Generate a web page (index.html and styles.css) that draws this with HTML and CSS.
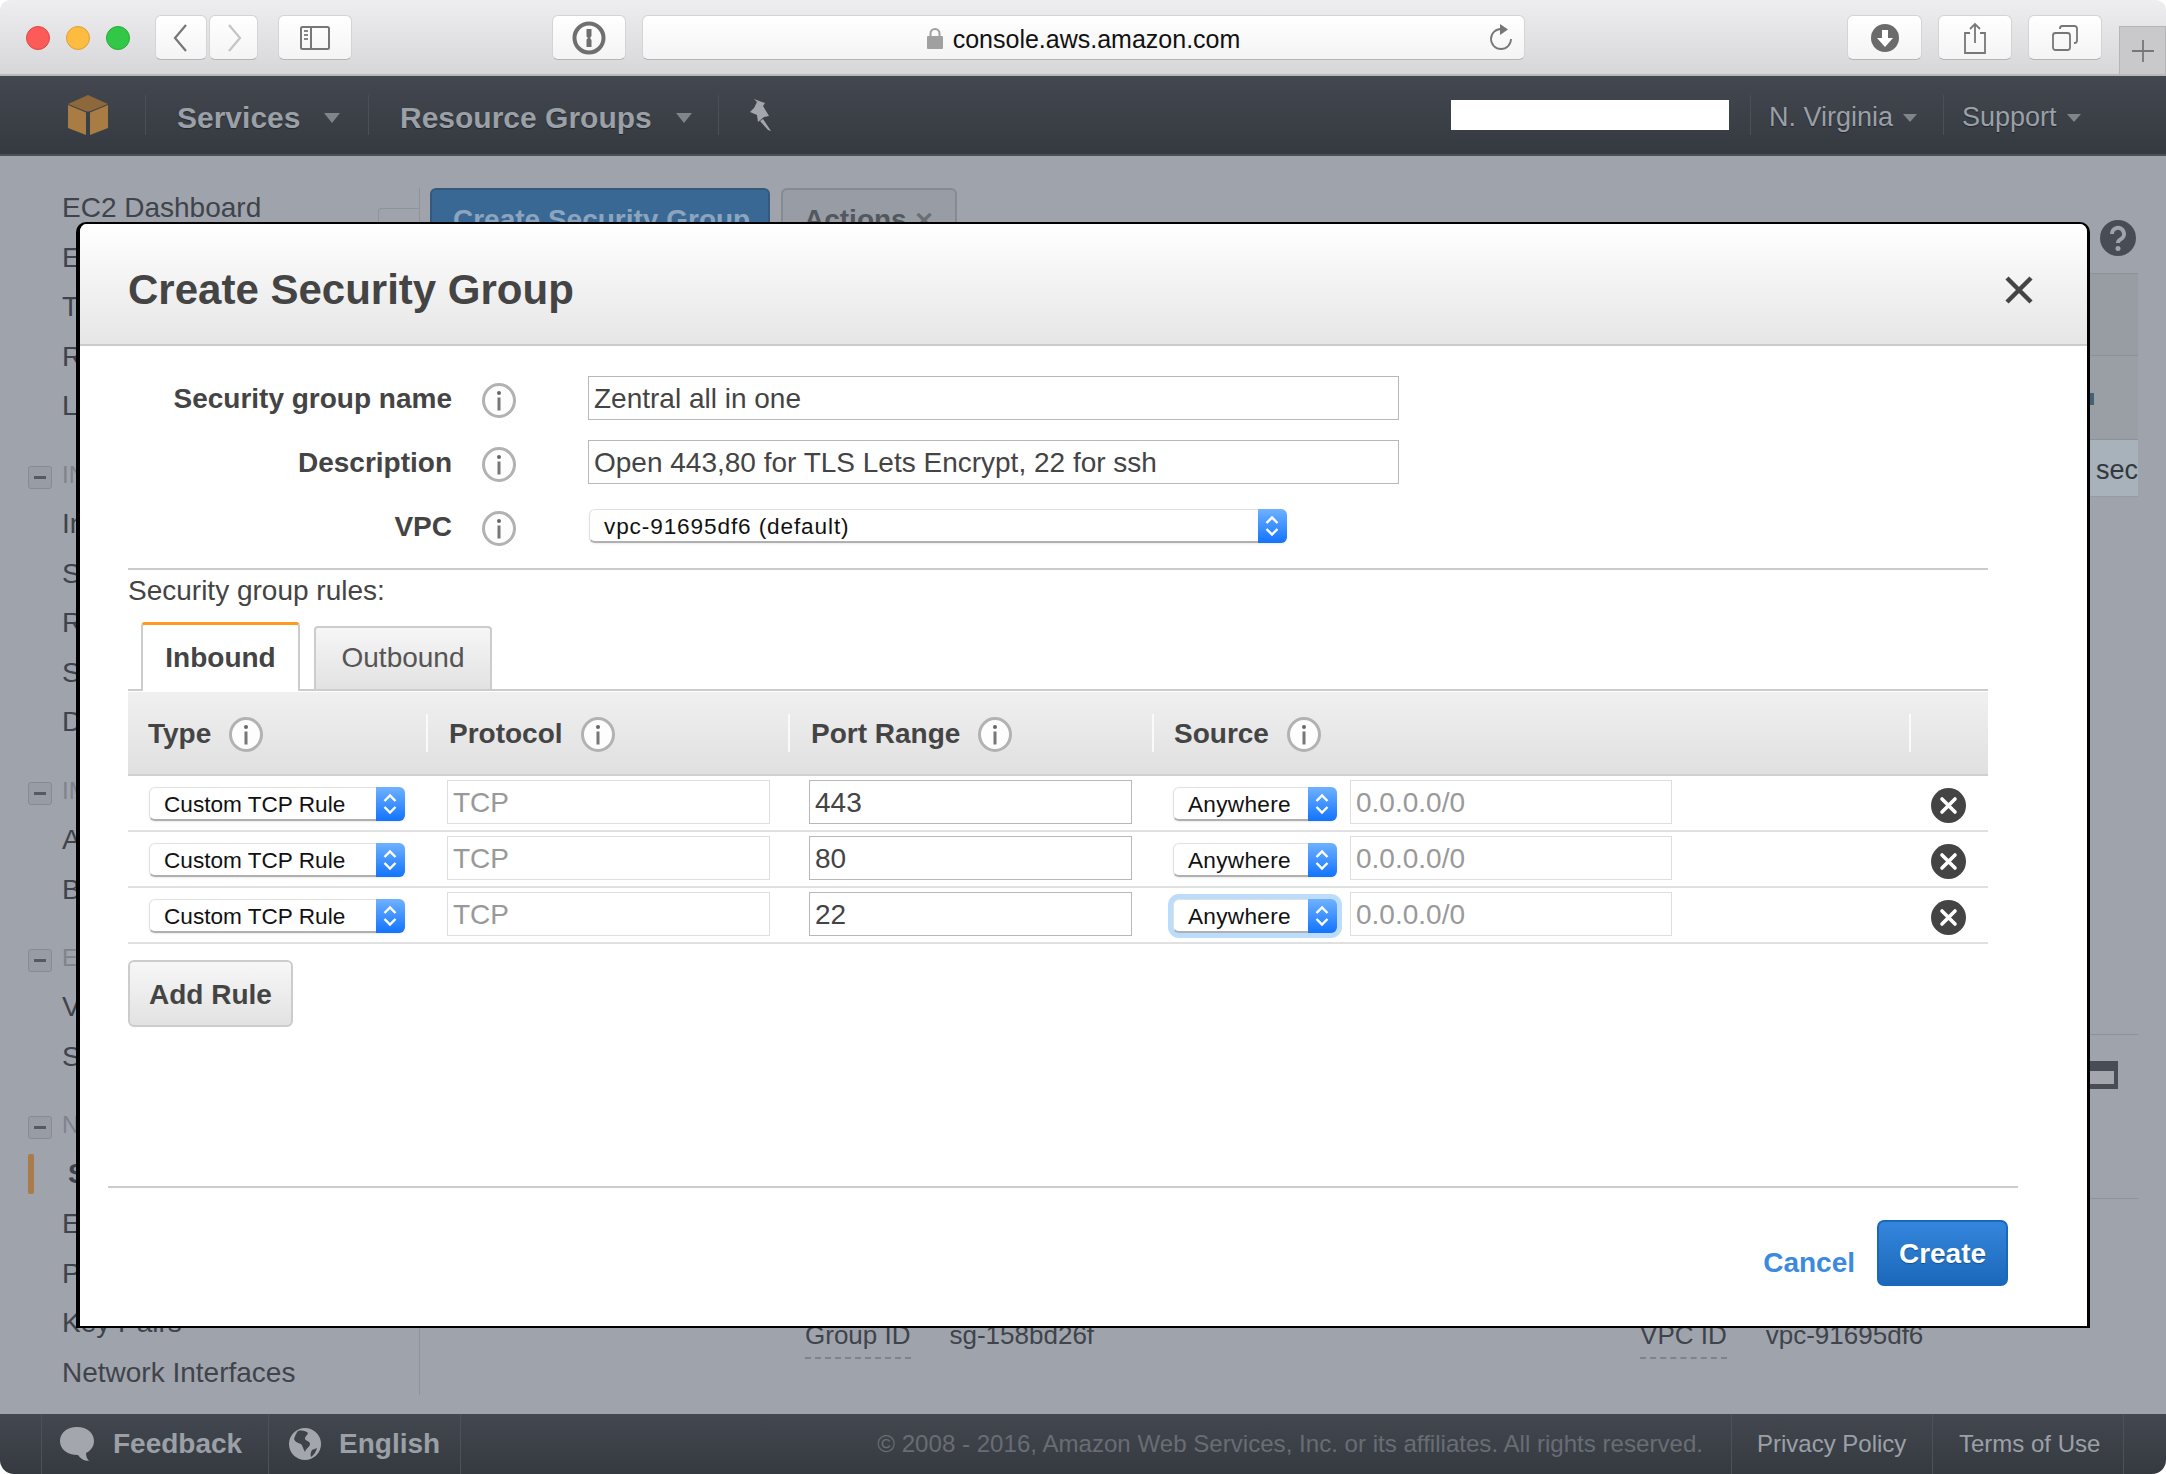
FILE: index.html
```html
<!DOCTYPE html>
<html lang="en">
<head>
  <meta charset="UTF-8" />
  <title>Create Security Group</title>
  <link rel="stylesheet" href="styles.css">
</head>

<body>
  <!-- Shared icons -->
  <svg class="icon-defs" width="0" height="0">
    <symbol id="info" viewBox="0 0 34 35">
      <ellipse cx="17" cy="17.5" rx="15.5" ry="16" fill="#fdfdfd" stroke="#b2b2b2" stroke-width="3"/>
      <circle cx="17" cy="10" r="2" fill="#666"/>
      <rect x="15.5" y="14.5" width="3" height="13" fill="#777"/>
    </symbol>
    <symbol id="updown" viewBox="0 0 28 34">
      <path d="M8.5 14l5.5-5.5 5.500 5.500M8.500 20l5.500 5.500 5.500-5.500" fill="none" stroke="#fff" stroke-width="2.400"/>
    </symbol>
    <symbol id="remove" viewBox="0 0 35 35">
      <circle cx="17.500" cy="17.500" r="17.500" fill="#444"/>
      <path d="M11 11l13 13M24 11L11 24" stroke="#fff" stroke-width="3.600" stroke-linecap="round"/>
    </symbol>
  </svg>

  <div class="window">

    <!-- Safari toolbar -->
    <div class="toolbar">
      <div class="lights">
        <span class="light red"></span>
        <span class="light yellow"></span>
        <span class="light green"></span>
      </div>
      <div class="tool back">
        <svg width="20" height="30" viewBox="0 0 20 30"><path d="M15 2L4 15l11 13" fill="none" stroke="#777" stroke-width="2.200"/></svg>
      </div>
      <div class="tool forward">
        <svg width="20" height="30" viewBox="0 0 20 30"><path d="M5 2l11 13L5 28" fill="none" stroke="#c4c4c4" stroke-width="2.200"/></svg>
      </div>
      <div class="tool sidebar-toggle">
        <svg width="30" height="24" viewBox="0 0 30 24">
          <rect x="1" y="1" width="28" height="22" rx="1.500" fill="none" stroke="#777" stroke-width="2"/>
          <path d="M11 1v22" stroke="#777" stroke-width="2"/>
          <path d="M4 5h4M4 9h4M4 13h4" stroke="#888" stroke-width="2"/>
        </svg>
      </div>
      <div class="tool onepass">
        <svg width="34" height="34" viewBox="0 0 34 34">
          <circle cx="17" cy="17" r="14.500" fill="none" stroke="#6f6f6f" stroke-width="4"/>
          <path d="M14.500 8h5v7l-1.500 2 1.500 2v7h-5v-7.500l1.500-1.500-1.500-1.500z" fill="#6f6f6f"/>
        </svg>
      </div>
      <div class="urlbar">
        <div class="url">
          <svg width="16" height="22" viewBox="0 0 16 22">
            <path d="M3.500 10V6.500a4.500 4.500 0 0 1 9 0V10" fill="none" stroke="#a0a0a0" stroke-width="2"/>
            <rect y="9" width="16" height="13" rx="1" fill="#a0a0a0"/>
          </svg>
          <span>console.aws.amazon.com</span>
        </div>
        <svg class="reload" width="24" height="28" viewBox="0 0 24 28">
          <path d="M12 5a10 10 0 1 0 10 10" fill="none" stroke="#777" stroke-width="1.800"/>
          <path d="M11 0l8 5.500-8 5.500z" fill="#777"/>
        </svg>
      </div>
      <div class="tool download">
        <svg width="28" height="28" viewBox="0 0 28 28">
          <circle cx="14" cy="14" r="14" fill="#6b6b6b"/>
          <path d="M11 6h6v8h5l-8 9-8-9h5z" fill="#fff"/>
        </svg>
      </div>
      <div class="tool share">
        <svg width="24" height="32" viewBox="0 0 24 32">
          <path d="M7 11H2v20h20V11h-5" fill="none" stroke="#777" stroke-width="1.800"/>
          <path d="M12 21V2M7 7l5-5 5 5" fill="none" stroke="#777" stroke-width="1.800"/>
        </svg>
      </div>
      <div class="tool tabs-btn">
        <svg width="26" height="26" viewBox="0 0 26 26">
          <rect x="1" y="8" width="17" height="17" rx="2.500" fill="none" stroke="#777" stroke-width="1.800"/>
          <path d="M8 4V3.500A2.500 2.500 0 0 1 10.500 1h12A2.500 2.500 0 0 1 25 3.500v12a2.500 2.500 0 0 1-2.500 2.500H22" fill="none" stroke="#777" stroke-width="1.800"/>
        </svg>
      </div>
      <div class="new-tab">
        <svg width="24" height="24" viewBox="0 0 24 24"><path d="M12 1v22M1 12h22" stroke="#777" stroke-width="1.800"/></svg>
      </div>
    </div>

    <!-- AWS navigation -->
    <div class="topnav">
      <div class="nav-logo">
        <svg width="40" height="40" viewBox="0 0 40 40">
          <path d="M20 0l20 9-18.500 7.500h-3L0 9z" fill="#8c683a"/>
          <path d="M0 10l18 7.500V40L0 33z" fill="#a87c43"/>
          <path d="M40 10l-18 7.500V40l18-7z" fill="#a87c43"/>
        </svg>
      </div>
      <div class="nav-item services">Services<span class="caret"></span></div>
      <div class="nav-item resources">Resource Groups<span class="caret"></span></div>
      <div class="nav-item pin">
        <svg width="26" height="34" viewBox="0 0 26 34">
          <path d="M7 1l11 4-2 3 6 10-5 1-6 5-1-7-7-3 4-4 3-6z" fill="#a3a7ad"/>
          <path d="M16 21l8 12-3-1-8-9z" fill="#a3a7ad"/>
        </svg>
      </div>
      <div class="nav-spacer"></div>
      <div class="account-mask"></div>
      <div class="nav-item small region">N. Virginia<span class="caret tiny"></span></div>
      <div class="nav-item small support">Support<span class="caret tiny"></span></div>
    </div>

    <!-- EC2 console, dimmed behind the dialog -->
    <div class="console">
      <div class="sidenav">
        <div class="side-item">EC2 Dashboard</div>
        <div class="side-item">Events</div>
        <div class="side-item">Tags</div>
        <div class="side-item">Reports</div>
        <div class="side-item">Limits</div>

        <div class="side-section"><span class="collapse"></span>INSTANCES</div>
        <div class="side-item">Instances</div>
        <div class="side-item">Spot Requests</div>
        <div class="side-item">Reserved Instances</div>
        <div class="side-item">Scheduled Instances</div>
        <div class="side-item">Dedicated Hosts</div>

        <div class="side-section"><span class="collapse"></span>IMAGES</div>
        <div class="side-item">AMIs</div>
        <div class="side-item">Bundle Tasks</div>

        <div class="side-section"><span class="collapse"></span>ELASTIC BLOCK STORE</div>
        <div class="side-item">Volumes</div>
        <div class="side-item">Snapshots</div>

        <div class="side-section"><span class="collapse"></span>NETWORK &amp; SECURITY</div>
        <div class="side-item active">Security Groups</div>
        <div class="side-item">Elastic IPs</div>
        <div class="side-item">Placement Groups</div>
        <div class="side-item">Key Pairs</div>
        <div class="side-item">Network Interfaces</div>
      </div>

      <div class="main">
        <div class="main-actions">
          <div class="bg-btn primary">Create Security Group</div>
          <div class="bg-btn">Actions <span class="bg-x">&#10005;</span></div>
          <svg class="help" width="36" height="36" viewBox="0 0 36 36">
            <circle cx="18" cy="18" r="18" fill="#484d55"/>
            <path d="M12 14a6 6 0 1 1 9 5c-2 1-3 2-3 4" fill="none" stroke="#9fa3ab" stroke-width="4"/>
            <circle cx="18" cy="28.500" r="2.500" fill="#9fa3ab"/>
          </svg>
        </div>
        <div class="grid-head"></div>
        <div class="grid-row"><span class="row-mark"></span></div>
        <div class="grid-row selected"><span class="row-text">sec</span></div>
        <div class="detail-tabs"><span class="detail-icon"></span></div>
        <div class="detail-line"></div>
        <div class="detail-fields">
          <span class="detail-label first">Group ID</span>
          <span class="detail-value">sg-158bd26f</span>
          <span class="detail-label second">VPC ID</span>
          <span class="detail-value">vpc-91695df6</span>
        </div>
      </div>
    </div>

    <!-- Footer -->
    <div class="footer">
      <div class="foot-item feedback">
        <svg width="36" height="34" viewBox="0 0 36 34"><path d="M18 0c10 0 17 6 17 14 0 6-4 10-8 12 0 3 1 6 3 8-5 0-9-3-11-6C8 28 1 22 1 14 1 6 8 0 18 0z" fill="#a3a7ad"/></svg>
        <span>Feedback</span>
      </div>
      <div class="foot-item english">
        <svg width="32" height="32" viewBox="0 0 32 32">
          <circle cx="16" cy="16" r="16" fill="#a3a7ad"/>
          <path d="M9 3c4-1 8 0 10 2-1 3-3 3-3 6 1 2 5 2 5 5s-4 4-5 8c-2-3-2-6-4-8-3-1-6-2-7-5 1-3 2-6 4-8zM23 22l5-2c-1 4-3 7-6 9-1-3 0-5 1-7z" fill="#3e4249"/>
        </svg>
        <span>English</span>
      </div>
      <div class="copyright">&copy; 2008 - 2016, Amazon Web Services, Inc. or its affiliates. All rights reserved.</div>
      <div class="foot-link privacy">Privacy Policy</div>
      <div class="foot-link terms">Terms of Use</div>
      <div class="foot-end"></div>
    </div>

    <!-- Dialog -->
    <div class="modal">
      <div class="modal-header">
        <div class="modal-title">Create Security Group</div>
        <svg class="modal-close" width="28" height="28" viewBox="0 0 28 28"><path d="M2 2l24 24M26 2L2 26" stroke="#444" stroke-width="4.500"/></svg>
      </div>

      <div class="modal-body">
        <div class="form-row">
          <div class="form-label">Security group name</div>
          <svg class="info form-info"><use href="#info"/></svg>
          <div class="field wide">Zentral all in one</div>
        </div>
        <div class="form-row">
          <div class="form-label">Description</div>
          <svg class="info form-info"><use href="#info"/></svg>
          <div class="field wide">Open 443,80 for TLS Lets Encrypt, 22 for ssh</div>
        </div>
        <div class="form-row vpc-row">
          <div class="form-label">VPC</div>
          <svg class="info form-info"><use href="#info"/></svg>
          <div class="select vpc-select">
            <span class="select-text">vpc-91695df6 (default)</span>
            <span class="select-arrow"><svg width="28" height="34"><use href="#updown"/></svg></span>
          </div>
        </div>

        <div class="rules">
          <div class="rules-title">Security group rules:</div>
          <div class="tabs">
            <div class="tab active">Inbound</div>
            <div class="tab">Outbound</div>
          </div>

          <div class="rule-head">
            <div class="head-cell first">Type<svg class="info"><use href="#info"/></svg></div>
            <div class="head-cell">Protocol<svg class="info"><use href="#info"/></svg></div>
            <div class="head-cell">Port Range<svg class="info"><use href="#info"/></svg></div>
            <div class="head-cell source-head">Source<svg class="info"><use href="#info"/></svg></div>
            <div class="head-cell"></div>
          </div>

          <div class="rule-row">
            <div class="select type-select"><span class="select-text">Custom TCP Rule</span><span class="select-arrow"><svg width="28" height="34"><use href="#updown"/></svg></span></div>
            <div class="field cell-field readonly">TCP</div>
            <div class="field cell-field">443</div>
            <div class="source-cell">
              <div class="select source-select"><span class="select-text">Anywhere</span><span class="select-arrow"><svg width="28" height="34"><use href="#updown"/></svg></span></div>
              <div class="field ip-field readonly">0.0.0.0/0</div>
            </div>
            <svg class="remove"><use href="#remove"/></svg>
          </div>
          <div class="rule-row">
            <div class="select type-select"><span class="select-text">Custom TCP Rule</span><span class="select-arrow"><svg width="28" height="34"><use href="#updown"/></svg></span></div>
            <div class="field cell-field readonly">TCP</div>
            <div class="field cell-field">80</div>
            <div class="source-cell">
              <div class="select source-select"><span class="select-text">Anywhere</span><span class="select-arrow"><svg width="28" height="34"><use href="#updown"/></svg></span></div>
              <div class="field ip-field readonly">0.0.0.0/0</div>
            </div>
            <svg class="remove"><use href="#remove"/></svg>
          </div>
          <div class="rule-row">
            <div class="select type-select"><span class="select-text">Custom TCP Rule</span><span class="select-arrow"><svg width="28" height="34"><use href="#updown"/></svg></span></div>
            <div class="field cell-field readonly">TCP</div>
            <div class="field cell-field">22</div>
            <div class="source-cell">
              <div class="select source-select focused"><span class="select-text">Anywhere</span><span class="select-arrow"><svg width="28" height="34"><use href="#updown"/></svg></span></div>
              <div class="field ip-field readonly">0.0.0.0/0</div>
            </div>
            <svg class="remove"><use href="#remove"/></svg>
          </div>

          <div class="add-rule">Add Rule</div>
        </div>
      </div>

      <div class="modal-footer">
        <div class="cancel">Cancel</div>
        <div class="create">Create</div>
      </div>
    </div>
  </div>
</body>
</html>
```

FILE: styles.css
```css
* {
  box-sizing: border-box;
}

body {
  margin: 0;
  background-color: #ffffff;
  font-family: "Liberation Sans", Arial, sans-serif;
  color: #3f444b;
}

.icon-defs {
  position: absolute;
}

.window {
  position: relative;
  width: 2166px;
  height: 1474px;
  display: flex;
  flex-direction: column;
  overflow: hidden;
  border-radius: 10px 10px 14px 14px;
}

/* Safari toolbar */
.toolbar {
  height: 76px;
  flex: none;
  display: flex;
  align-items: flex-start;
  padding-top: 15px;
  background: linear-gradient(#eeedef, #d7d6d8);
  border-bottom: 2px solid #b9b8ba;
}

.lights {
  display: flex;
  gap: 16px;
  margin: 11px 25px 0 26px;
}

.light {
  width: 24px;
  height: 24px;
  border-radius: 50%;
}

.light.red {
  background-color: #fc5b57;
  border: 1px solid #df4744;
}

.light.yellow {
  background-color: #fdbc40;
  border: 1px solid #de9f34;
}

.light.green {
  background-color: #33c748;
  border: 1px solid #27aa35;
}

.tool {
  height: 45px;
  display: flex;
  align-items: center;
  justify-content: center;
  background: linear-gradient(#ffffff, #f4f4f4);
  border: 1px solid #d4d4d4;
  border-bottom-color: #b5b5b5;
  border-radius: 6px;
}

.back {
  width: 52px;
}

.forward {
  width: 49px;
  margin-left: 2px;
}

.sidebar-toggle {
  width: 74px;
  margin-left: 20px;
}

.onepass {
  width: 74px;
  margin-left: 200px;
}

.urlbar {
  width: 883px;
  height: 45px;
  margin-left: 16px;
  position: relative;
  display: flex;
  align-items: center;
  justify-content: center;
  background: linear-gradient(#ffffff, #f4f4f4);
  border: 1px solid #d4d4d4;
  border-bottom-color: #b5b5b5;
  border-radius: 6px;
}

.url {
  display: flex;
  align-items: center;
  gap: 10px;
  font-size: 25px;
  color: #111;
}

.url span {
  padding-top: 3px;
}

.reload {
  position: absolute;
  right: 11px;
  top: 8px;
}

.download {
  width: 75px;
  margin-left: 322px;
}

.share {
  width: 74px;
  margin-left: 16px;
}

.tabs-btn {
  width: 74px;
  margin-left: 16px;
}

.new-tab {
  width: 47px;
  height: 48px;
  margin: 11px 0 0 17px;
  display: flex;
  align-items: center;
  justify-content: center;
  background-color: #c9c8ca;
  border: 1px solid #b5b4b6;
  border-bottom: none;
}

/* Top navigation */
.topnav {
  height: 80px;
  flex: none;
  display: flex;
  align-items: center;
  background: linear-gradient(#434850, #353940);
  border-bottom: 2px solid #4a4e55;
  color: #9ba0a7;
  font-weight: bold;
  font-size: 30px;
  text-shadow: 0 1px 1px #22262b;
}

.nav-logo {
  width: 145px;
  height: 40px;
  padding-left: 68px;
}

.nav-item {
  height: 40px;
  display: flex;
  align-items: center;
  padding-top: 5px;
  border-left: 1px solid #4b5058;
}

.services {
  width: 223px;
  padding-left: 31px;
}

.resources {
  width: 350px;
  padding-left: 31px;
}

.pin {
  width: 80px;
  padding-top: 0;
  padding-left: 28px;
}

.nav-spacer {
  flex: 1;
}

.account-mask {
  width: 278px;
  height: 30px;
  margin-right: 21px;
  background-color: #ffffff;
}

.nav-item.small {
  font-weight: normal;
  font-size: 27px;
}

.region {
  width: 193px;
  padding-left: 18px;
}

.support {
  width: 223px;
  padding-left: 18px;
}

.caret {
  width: 0;
  height: 0;
  margin-left: 24px;
  margin-top: 1px;
  border-left: 8px solid transparent;
  border-right: 8px solid transparent;
  border-top: 10px solid #80858c;
}

.caret.tiny {
  margin-left: 10px;
  border-left-width: 7px;
  border-right-width: 7px;
  border-top-width: 8px;
}

/* Console behind the dialog */
.console {
  flex: 1;
  display: flex;
  background-color: #9fa3ab;
}

.sidenav {
  position: relative;
  width: 420px;
  flex: none;
  padding: 27px 0 0 62px;
  font-size: 28px;
}

.sidenav::before {
  content: "";
  position: absolute;
  top: 32px;
  bottom: 19px;
  right: 0;
  border-right: 1px solid #8f939b;
}

.sidenav::after {
  content: "";
  position: absolute;
  top: 52px;
  right: 0;
  width: 41px;
  height: 14px;
  border-top: 1px solid #8f939b;
  border-left: 1px solid #8f939b;
  border-top-left-radius: 4px;
}

.side-item {
  height: 49.6px;
  line-height: 49.6px;
  white-space: nowrap;
}

.side-item.active {
  position: relative;
  padding-left: 6px;
  font-weight: bold;
}

.side-item.active::before {
  content: "";
  position: absolute;
  left: -34px;
  top: 5px;
  width: 6px;
  height: 40px;
  background-color: #a97c4a;
  border-radius: 2px;
}

.side-section {
  position: relative;
  height: 48px;
  margin-top: 20px;
  line-height: 48px;
  font-size: 24px;
  color: #7f848c;
  white-space: nowrap;
}

.collapse {
  position: absolute;
  left: -34px;
  top: 15px;
  width: 24px;
  height: 23px;
  border: 1px solid #868a92;
  border-radius: 3px;
  background-color: #989ca4;
}

.collapse::after {
  content: "";
  position: absolute;
  left: 5px;
  right: 5px;
  top: 9px;
  height: 3px;
  background-color: #555a61;
}

.main {
  flex: 1;
  display: flex;
  flex-direction: column;
  padding: 32px 28px 0 10px;
  min-width: 0;
}

.main-actions {
  height: 85px;
  display: flex;
  align-items: flex-start;
  gap: 11px;
}

.bg-btn {
  height: 60px;
  padding: 14px 21px 0;
  border: 2px solid #868a92;
  border-radius: 6px;
  font-size: 28px;
  font-weight: bold;
  color: #53575e;
  background-color: #989ca4;
  white-space: nowrap;
}

.bg-btn.primary {
  width: 340px;
  color: #8ca5bf;
  background-color: #3a6894;
  border-color: #34597c;
}

.bg-x {
  font-size: 24px;
  color: #6a6e75;
}

.help {
  margin: 32px 2px 0 auto;
}

.grid-head {
  height: 83px;
  flex: none;
  background-color: #989ca3;
  border-top: 1px solid #8d9198;
  border-bottom: 1px solid #8d9198;
}

.grid-row {
  position: relative;
  height: 84px;
  flex: none;
  background-color: #9a9ea5;
  border-bottom: 1px solid #8d9198;
  font-size: 28px;
}

.row-mark {
  position: absolute;
  right: 44px;
  top: 37px;
  width: 5px;
  height: 12px;
  background-color: #446277;
}

.grid-row.selected {
  height: 57px;
  display: flex;
  justify-content: flex-end;
  align-items: center;
  padding-top: 4px;
  background-color: #a7b2ba;
  border-bottom: 1px solid #959ca4;
}

.row-text {
  font-size: 27px;
  color: #33383e;
}

.detail-tabs {
  position: relative;
  height: 538px;
  flex: none;
  border-bottom: 1px solid #8d9198;
}

.detail-icon {
  position: absolute;
  right: 20px;
  bottom: -55px;
  width: 40px;
  height: 28px;
  background-color: #a3a7ad;
  border: 4px solid #484d55;
  border-top-width: 10px;
  border-bottom-width: 5px;
}

.detail-line {
  height: 164px;
  flex: none;
  border-bottom: 1px solid #8d9198;
}

.detail-fields {
  display: flex;
  margin-top: 121px;
  font-size: 26px;
  white-space: nowrap;
}

.detail-label {
  height: 39px;
  border-bottom: 2px dashed #7f848c;
}

.detail-label.first {
  margin-left: 375px;
}

.detail-label.second {
  margin-left: 546px;
}

.detail-value {
  margin-left: 39px;
}

/* Footer */
.footer {
  height: 60px;
  flex: none;
  display: flex;
  align-items: stretch;
  padding-left: 41px;
  background: linear-gradient(#434850, #353940);
  color: #9ba0a7;
  font-size: 24px;
}

.foot-item,
.foot-link {
  display: flex;
  align-items: center;
  border-left: 1px solid #4d5159;
}

.foot-item {
  gap: 18px;
  font-size: 28px;
  font-weight: bold;
}

.feedback {
  width: 227px;
  padding-left: 17px;
}

.english {
  width: 193px;
  padding-left: 20px;
  border-right: 1px solid #4d5159;
}

.copyright {
  margin-left: auto;
  padding-right: 28px;
  line-height: 60px;
  font-size: 24.1px;
  color: #686d74;
}

.privacy {
  width: 201px;
  padding-left: 25px;
}

.terms {
  width: 192px;
  padding-left: 26px;
  border-right: 1px solid #4d5159;
}

.foot-end {
  width: 42px;
}

/* Dialog */
.modal {
  position: absolute;
  left: 76px;
  top: 222px;
  width: 2014px;
  height: 1106px;
  display: flex;
  flex-direction: column;
  background-color: #ffffff;
  border: 3px solid #000000;
  border-left-width: 4px;
  border-top-width: 2px;
  border-bottom-width: 2px;
  border-radius: 10px 10px 0 0;
}

.modal-header {
  height: 122px;
  flex: none;
  display: flex;
  align-items: center;
  justify-content: space-between;
  padding: 11px 54px 0 48px;
  background: linear-gradient(#ffffff, #e6e6e6);
  border-bottom: 2px solid #cccccc;
  border-radius: 8px 8px 0 0;
}

.modal-title {
  font-size: 42px;
  font-weight: bold;
  color: #444444;
}

.modal-body {
  flex: 1;
  padding-top: 30px;
}

.form-row {
  height: 44px;
  margin-bottom: 20px;
  display: flex;
  align-items: center;
}

.form-label {
  width: 372px;
  padding-top: 2px;
  text-align: right;
  font-size: 28px;
  font-weight: bold;
  color: #444444;
}

.info {
  width: 34px;
  height: 35px;
  flex: none;
}

.form-info {
  margin: 4px 72px 0 30px;
}

.field {
  height: 44px;
  line-height: 43px;
  padding-left: 5px;
  border: 1px solid #b8b8b8;
  background-color: #ffffff;
  font-size: 28px;
  color: #444444;
}

.field.readonly {
  border-color: #dedede;
  color: #999999;
}

.wide {
  width: 811px;
}

.select {
  height: 34px;
  display: flex;
  background-color: #ffffff;
  border: 1px solid #e0e0e0;
  border-bottom: 2px solid #b0b0b0;
  border-radius: 6px;
  box-shadow: 0 1px 2px rgba(0, 0, 0, 0.08);
  font-size: 22.6px;
  color: #111111;
}

.select-text {
  flex: 1;
  padding-left: 14px;
  line-height: 34px;
  white-space: nowrap;
}

.select-arrow {
  width: 29px;
  height: 34px;
  margin: -1px -1px -2px 0;
  flex: none;
  background: linear-gradient(#6fb2ff, #1273ff);
  border-radius: 0 6px 6px 0;
}

.vpc-row {
  height: 34px;
  margin-bottom: 0;
  margin-top: 25px;
}

.vpc-select {
  width: 698px;
  margin-left: 1px;
  letter-spacing: 0.88px;
}

.rules {
  margin: 25px 99px 0 48px;
  border-top: 2px solid #cccccc;
}

.rules-title {
  height: 52px;
  padding-top: 4px;
  line-height: 34px;
  font-size: 28px;
  color: #444444;
}

.tabs {
  height: 69px;
  display: flex;
  align-items: flex-end;
  gap: 14px;
  padding-left: 13px;
  border-bottom: 2px solid #cccccc;
}

.tab {
  width: 178px;
  height: 63px;
  text-align: center;
  line-height: 60px;
  font-size: 28px;
  color: #555555;
  background: linear-gradient(#f6f6f6, #e2e2e2);
  border: 2px solid #cccccc;
  border-bottom: none;
  border-radius: 4px 4px 0 0;
}

.tab.active {
  width: 159px;
  height: 69px;
  margin-bottom: -2px;
  line-height: 66px;
  font-weight: bold;
  color: #444444;
  background: #ffffff;
  border-top: 3px solid #ff9a1f;
}

.rule-head {
  height: 84px;
  margin-top: 1px;
  display: grid;
  grid-template-columns: 298px 362px 364px 757px 79px;
  align-items: center;
  background: linear-gradient(#f0f0f0, #e0e0e0);
  border-bottom: 2px solid #d0d0d0;
}

.head-cell {
  height: 38px;
  display: flex;
  align-items: center;
  gap: 18px;
  padding: 2px 0 0 21px;
  border-left: 2px solid #fafafa;
  font-size: 28px;
  font-weight: bold;
  color: #444444;
}

.head-cell.first {
  padding-left: 20px;
  border-left: none;
}

.head-cell.source-head {
  padding-left: 20px;
}

.rule-row {
  height: 56px;
  display: grid;
  grid-template-columns: 298px 362px 364px 757px 79px;
  align-items: start;
  border-bottom: 2px solid #e0e0e0;
}

.type-select {
  width: 256px;
  margin: 11px 0 0 21px;
}

.cell-field {
  width: 323px;
  margin: 4px 0 0 21px;
}

.source-cell {
  display: flex;
  align-items: flex-start;
  gap: 13px;
  padding: 4px 0 0 21px;
}

.source-select {
  width: 164px;
  margin-top: 7px;
  letter-spacing: 0.3px;
}

.source-select.focused {
  box-shadow: 0 0 0 5px #bcdcfb;
}

.ip-field {
  width: 322px;
}

.remove {
  width: 35px;
  height: 35px;
  margin: 12px 0 0 22px;
}

.add-rule {
  width: 165px;
  height: 67px;
  margin-top: 16px;
  text-align: center;
  line-height: 66px;
  font-size: 28px;
  font-weight: bold;
  color: #444444;
  background: linear-gradient(#f7f7f7, #e2e2e2);
  border: 2px solid #cccccc;
  border-radius: 6px;
}

.modal-footer {
  height: 140px;
  flex: none;
  display: flex;
  justify-content: flex-end;
  gap: 22px;
  margin: 0 69px 0 28px;
  padding: 32px 10px 0 0;
  border-top: 2px solid #cccccc;
}

.cancel {
  height: 66px;
  line-height: 86px;
  font-size: 28px;
  font-weight: bold;
  color: #3b8ae0;
}

.create {
  width: 131px;
  height: 66px;
  text-align: center;
  line-height: 64px;
  font-size: 28px;
  font-weight: bold;
  color: #ffffff;
  background: linear-gradient(#3486dc, #1b68bb);
  border: 2px solid #1a68bc;
  border-radius: 7px;
  text-shadow: 0 1px 1px #10508f;
}
```
